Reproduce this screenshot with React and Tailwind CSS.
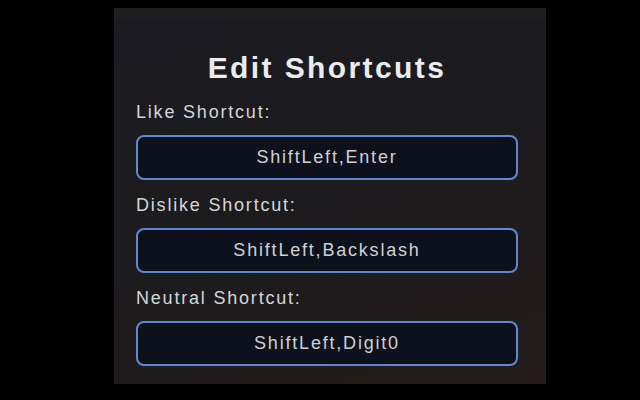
const shortcuts = [
  { label: 'Like Shortcut:', value: 'ShiftLeft,Enter' },
  { label: 'Dislike Shortcut:', value: 'ShiftLeft,Backslash' },
  { label: 'Neutral Shortcut:', value: 'ShiftLeft,Digit0' },
];

const font = { fontFamily: '"Liberation Sans", Arial, sans-serif' };

function ShortcutField({ label, value }) {
  return (
    <div className="flex flex-col">
      <label className="text-[18px] leading-[22px] tracking-[1.8px] text-[#d6d6d8]">{label}</label>
      <input
        readOnly
        value={value}
        className="mt-[12px] h-[45px] w-full rounded-[8px] border-2 border-[#5f8ad2] bg-[#0d111c] text-center text-[18px] tracking-[1.8px] text-[#d0d0d4] outline-none"
        style={font}
      />
    </div>
  );
}

export default function App() {
  return (
    <div className="flex h-[400px] w-[640px] justify-center bg-black pl-[20px] pt-[8px]" style={font}>
      <div className="flex h-[376px] w-[432px] flex-col bg-[linear-gradient(160deg,#1b1b22_0%,#1c1b1e_45%,#251b1c_100%)]">
        <div className="h-[12px] bg-[#1f1f21]" />
        <div className="flex flex-col pl-[22px] pr-[28px]">
          <h1 className="mt-[28px] text-center text-[30px] font-bold leading-[40px] tracking-[2.4px] text-[#ececee]">
            Edit Shortcuts
          </h1>
          <div className="mt-[13px] flex flex-col gap-[14px]">
            {shortcuts.map((s) => (
              <ShortcutField key={s.label} {...s} />
            ))}
          </div>
        </div>
      </div>
    </div>
  );
}
